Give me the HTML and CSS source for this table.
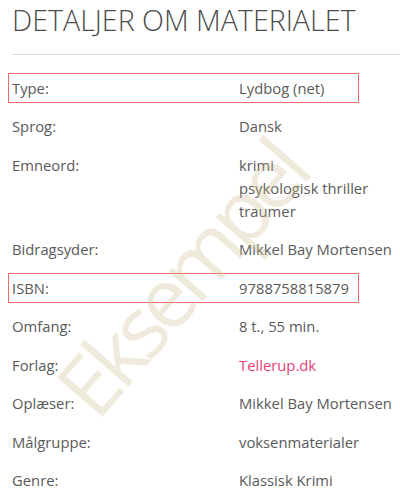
FILE: index.html
```html
<!DOCTYPE html>
<html lang="da">
<head>
<meta charset="utf-8">
<link rel="stylesheet" href="styles.css">
</head>
<body>
<section class="details">
  <h2 class="title">DETALJER OM MATERIALET</h2>
  <hr class="divider">
  <dl class="list">
    <div class="row mark"><dt>Type:</dt><dd>Lydbog (net)</dd></div>
    <div class="row"><dt>Sprog:</dt><dd>Dansk</dd></div>
    <div class="row"><dt>Emneord:</dt><dd>krimi<br>psykologisk thriller<br>traumer</dd></div>
    <div class="row"><dt>Bidragsyder:</dt><dd>Mikkel Bay Mortensen</dd></div>
    <div class="row mark"><dt>ISBN:</dt><dd>9788758815879</dd></div>
    <div class="row"><dt>Omfang:</dt><dd>8 t., 55 min.</dd></div>
    <div class="row"><dt>Forlag:</dt><dd><a class="link" href="#">Tellerup.dk</a></dd></div>
    <div class="row"><dt>Oplæser:</dt><dd>Mikkel Bay Mortensen</dd></div>
    <div class="row"><dt>Målgruppe:</dt><dd>voksenmaterialer</dd></div>
    <div class="row"><dt>Genre:</dt><dd>Klassisk Krimi</dd></div>
  </dl>
  <div class="watermark">Eksempel</div>
</section>
</body>
</html>
```
FILE: styles.css
```css
html, body {
  margin: 0;
  padding: 0;
  background: #fff;
}
body {
  font-family: "Open Sans", "Liberation Sans", sans-serif;
  color: #5a5a5a;
  overflow: hidden;
}
.details {
  position: relative;
  padding-left: 12px;
  height: 496px;
  overflow: hidden;
}
.title {
  margin: 0;
  font-size: 28.6px;
  font-weight: 300;
  line-height: 36px;
  color: #4b4b4b;
  padding-top: 2px;
}
.divider {
  margin: 16px 0 0 0;
  border: 0;
  border-top: 1px solid #dcdcdc;
  height: 0;
}
.list {
  margin: 14px 0 0 0;
  padding: 0;
}
.row {
  position: relative;
  display: grid;
  grid-template-columns: 227px 1fr;
  font-size: 14.8px;
  line-height: 23px;
  padding: 7.75px 0;
}
.row dt, .row dd {
  margin: 0;
}
.mark::after {
  content: "";
  position: absolute;
  left: -4px;
  width: 351px;
  top: 4.25px;
  bottom: 4.25px;
  border: 1px solid #f06a6a;
  box-sizing: border-box;
}
.link {
  color: #e2417a;
  text-decoration: none;
}
.watermark {
  position: absolute;
  left: 180px;
  top: 278px;
  transform: translate(-50%, -50%) rotate(-49deg);
  font-size: 84px;
  font-weight: 400;
  letter-spacing: -6px;
  color: rgba(205, 190, 145, 0.33);
  white-space: nowrap;
  pointer-events: none;
}
```
